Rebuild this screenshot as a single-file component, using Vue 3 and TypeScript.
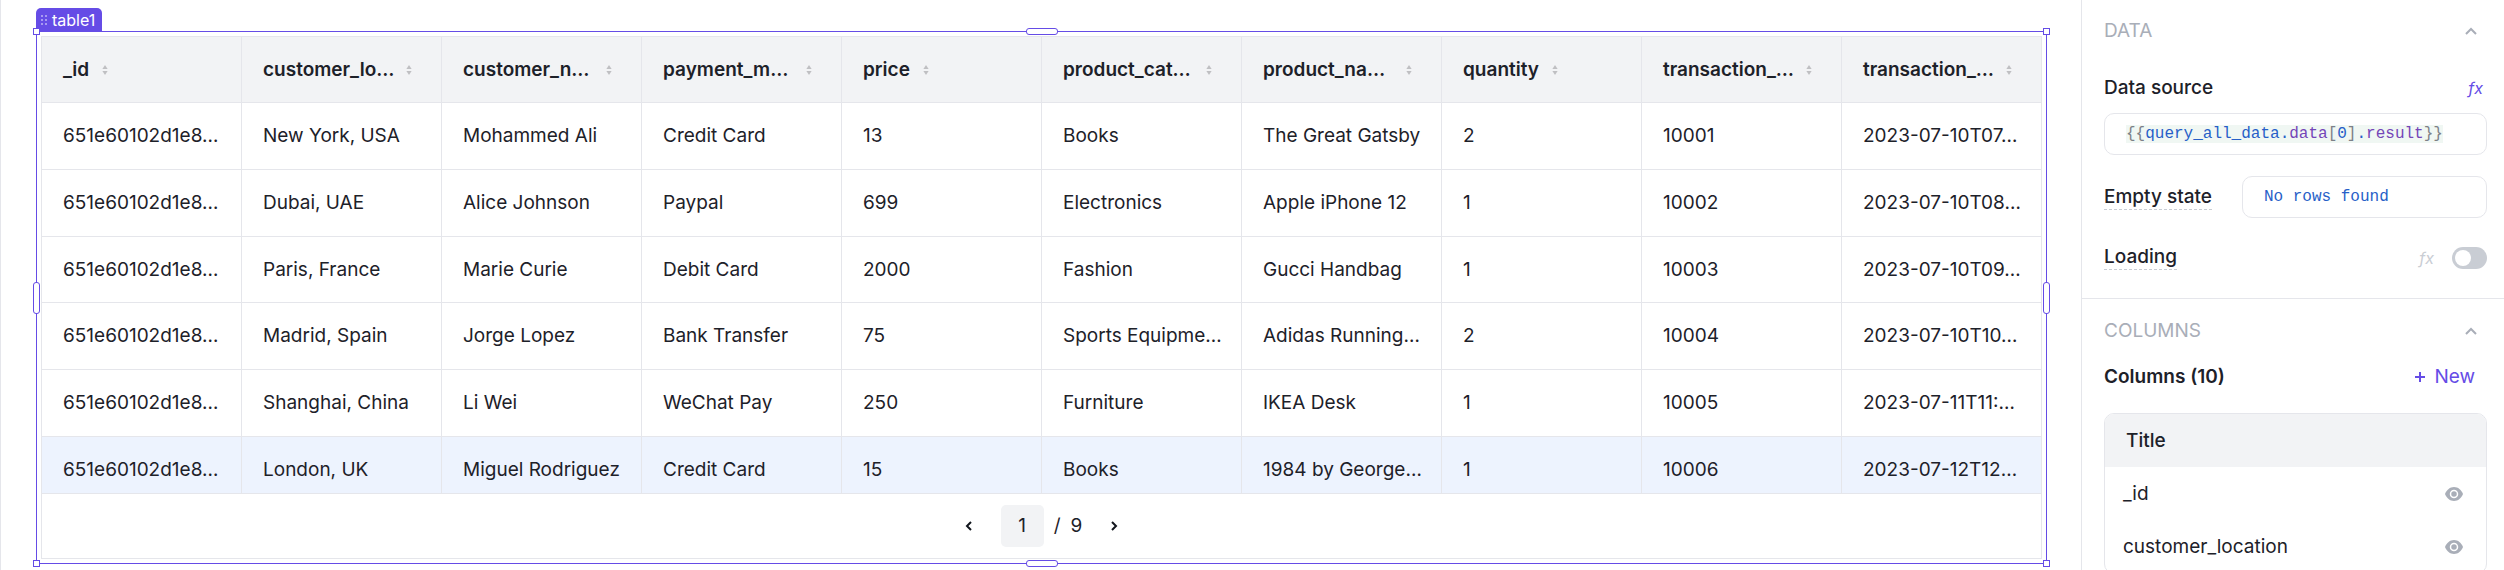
<script setup lang="ts">
import { ref } from 'vue'

interface Column {
  name: string
  cut?: boolean
}

const columns: Column[] = [
  { name: '_id' },
  { name: 'customer_lo…', cut: true },
  { name: 'customer_n…', cut: true },
  { name: 'payment_m…', cut: true },
  { name: 'price' },
  { name: 'product_cat…', cut: true },
  { name: 'product_na…', cut: true },
  { name: 'quantity' },
  { name: 'transaction_…', cut: true },
  { name: 'transaction_…', cut: true },
]

const rows: string[][] = [
  ['651e60102d1e8…', 'New York, USA', 'Mohammed Ali', 'Credit Card', '13', 'Books', 'The Great Gatsby', '2', '10001', '2023-07-10T07…'],
  ['651e60102d1e8…', 'Dubai, UAE', 'Alice Johnson', 'Paypal', '699', 'Electronics', 'Apple iPhone 12', '1', '10002', '2023-07-10T08…'],
  ['651e60102d1e8…', 'Paris, France', 'Marie Curie', 'Debit Card', '2000', 'Fashion', 'Gucci Handbag', '1', '10003', '2023-07-10T09…'],
  ['651e60102d1e8…', 'Madrid, Spain', 'Jorge Lopez', 'Bank Transfer', '75', 'Sports Equipme…', 'Adidas Running…', '2', '10004', '2023-07-10T10…'],
  ['651e60102d1e8…', 'Shanghai, China', 'Li Wei', 'WeChat Pay', '250', 'Furniture', 'IKEA Desk', '1', '10005', '2023-07-11T11:…'],
  ['651e60102d1e8…', 'London, UK', 'Miguel Rodriguez', 'Credit Card', '15', 'Books', '1984 by George…', '1', '10006', '2023-07-12T12…'],
]

const activeRow = ref(5)
const emptyState = ref('No rows found')
const loading = ref(false)
const columnFields = ['_id', 'customer_location']
const handles = ['nw', 'n', 'ne', 'w', 'e', 'sw', 's', 'se']
</script>

<template>
  <div class="editor">
    <main class="canvas">
      <section class="widget">
        <div class="badge">
          <svg width="6" height="10" viewBox="0 0 6 10" fill="#fff" aria-hidden="true">
            <g v-for="y in [1, 5, 9]" :key="y">
              <circle cx="1" :cy="y" r=".8" />
              <circle cx="5" :cy="y" r=".8" />
            </g>
          </svg>
          <span>table1</span>
        </div>
        <span v-for="h in handles" :key="h" class="handle" :class="h"></span>

        <div class="grid-box">
          <div class="grid-scroll">
            <table>
              <thead>
                <tr>
                  <th v-for="(c, i) in columns" :key="i" scope="col">
                    <div class="head">
                      <span :class="{ cut: c.cut }">{{ c.name }}</span>
                      <svg width="6" height="10" viewBox="0 0 6 10" fill="#bfbfc2" aria-hidden="true">
                        <path d="M3 0 5.600 4H.4z" />
                        <path d="M3 10 5.600 6H.4z" />
                      </svg>
                    </div>
                  </th>
                </tr>
              </thead>
              <tbody>
                <tr v-for="(r, i) in rows" :key="i" :class="{ active: i === activeRow }" @click="activeRow = i">
                  <td v-for="(v, j) in r" :key="j">{{ v }}</td>
                </tr>
              </tbody>
            </table>
          </div>
          <nav class="pager" aria-label="Pagination">
            <button type="button" class="step" aria-label="Previous page">
              <svg width="7" height="10" viewBox="0 0 7 10" fill="none" stroke="#11151c" stroke-width="2" aria-hidden="true"><path d="M6 1 2 5l4 4" /></svg>
            </button>
            <button type="button" class="page">1</button>
            <span>/</span>
            <span class="total">9</span>
            <button type="button" class="step" aria-label="Next page">
              <svg width="7" height="10" viewBox="0 0 7 10" fill="none" stroke="#11151c" stroke-width="2" aria-hidden="true"><path d="m1 1 4 4-4 4" /></svg>
            </button>
          </nav>
        </div>
      </section>
    </main>

    <aside class="panel">
      <section class="data">
        <button type="button" class="section-head">
          <span>DATA</span>
          <svg width="12" height="8" viewBox="0 0 12 8" fill="none" stroke="#a9aeb8" stroke-width="2" aria-hidden="true"><path d="m1 7 5-5 5 5" /></svg>
        </button>
        <div class="line source-line">
          <span id="source-label">Data source</span>
          <button type="button" class="fx on">fx</button>
        </div>
        <div class="field code" role="textbox" contenteditable="true" spellcheck="false" aria-labelledby="source-label"><code><i>{{ '{{' }}</i>query_all_data.<b>data</b><i>[</i>0<i>]</i>.<b>result</b><i>{{ '}\}' }}</i></code></div>
        <div class="line empty-line">
          <label for="empty-state" class="hint">Empty state</label>
          <input id="empty-state" v-model="emptyState" class="field" type="text" spellcheck="false" />
        </div>
        <div class="line loading-line">
          <label for="loading" class="hint">Loading</label>
          <button type="button" class="fx">fx</button>
          <input id="loading" v-model="loading" class="switch" type="checkbox" role="switch" />
        </div>
      </section>

      <section class="columns">
        <button type="button" class="section-head">
          <span>COLUMNS</span>
          <svg width="12" height="8" viewBox="0 0 12 8" fill="none" stroke="#a9aeb8" stroke-width="2" aria-hidden="true"><path d="m1 7 5-5 5 5" /></svg>
        </button>
        <div class="line columns-line">
          <h2>Columns (10)</h2>
          <button type="button" class="new">
            <svg width="10" height="10" viewBox="0 0 10 10" stroke="#654ce6" stroke-width="2" aria-hidden="true"><path d="M5 0v10M0 5h10" /></svg>
            New
          </button>
        </div>
        <div class="list">
          <div class="list-title">Title</div>
          <ul>
            <li v-for="f in columnFields" :key="f">
              <span>{{ f }}</span>
              <button type="button" class="eye" :aria-label="'Hide ' + f">
                <svg width="18" height="14" viewBox="0 0 18 14" aria-hidden="true">
                  <path d="M9 0C5 0 1.600 2.800 0 7c1.600 4.200 5 7 9 7s7.400-2.800 9-7c-1.600-4.200-5-7-9-7z" fill="#a9aeb8" />
                  <circle cx="9" cy="7" r="3.500" fill="#a9aeb8" stroke="#fff" stroke-width="1.500" />
                </svg>
              </button>
            </li>
          </ul>
        </div>
      </section>
    </aside>
  </div>
</template>

<style>
body {
  margin: 0;
  background: #fff;
}
</style>

<style scoped>
* {
  box-sizing: border-box;
}
.editor {
  display: flex;
  height: 100vh;
  overflow: hidden;
  font-family: Inter, sans-serif;
  font-size: 19px;
  line-height: 24px;
  color: #1d2129;
}
button {
  padding: 0;
  border: 0;
  background: none;
  font: inherit;
  color: inherit;
  cursor: pointer;
}
svg {
  display: block;
  flex: none;
}
.canvas {
  flex: 1;
  min-width: 0;
  display: flex;
  padding: 31px 34px 6px 35px;
  border-left: 1px solid #e5e6eb;
}
.widget {
  position: relative;
  flex: 1;
  min-width: 0;
  display: flex;
  padding: 4px;
  border: 1px solid #654ce6;
}
.badge {
  position: absolute;
  left: -1px;
  bottom: 100%;
  display: flex;
  align-items: center;
  gap: 5px;
  height: 24px;
  padding: 0 7px 0 5px;
  border-radius: 5px 5px 0 0;
  background: #654ce6;
  color: #fff;
  font-size: 16px;
}
.handle {
  position: absolute;
  z-index: 1;
  width: 7px;
  height: 7px;
  border: 1px solid #654ce6;
  background: #fff;
}
.nw, .n, .ne { top: -4px; }
.sw, .s, .se { bottom: -4px; }
.nw, .w, .sw { left: -4px; }
.ne, .e, .se { right: -4px; }
.n, .s {
  left: calc(50% - 16px);
  width: 32px;
  border-radius: 3px;
}
.w, .e {
  top: calc(50% - 16px);
  height: 32px;
  border-radius: 3px;
}
.grid-box {
  flex: 1;
  min-width: 0;
  display: flex;
  flex-direction: column;
  border: 1px solid #e5e6eb;
}
.grid-scroll {
  flex: 1;
  min-height: 0;
  overflow: hidden;
}
/* One pixel wider than its box, so the last column's rule falls under the box border. */
table {
  width: calc(100% + 1px);
  table-layout: fixed;
  border-collapse: separate;
  border-spacing: 0;
}
th,
td {
  height: 67px;
  padding: 0 0 0 21px;
  border-right: 1px solid #e5e6eb;
  border-bottom: 1px solid #e5e6eb;
  text-align: left;
  font-weight: 400;
  white-space: nowrap;
}
th {
  height: 66px;
  background: #f2f3f5;
  font-weight: 600;
}
tr:nth-child(3n) td {
  height: 66px;
}
.active td {
  background: #edf3fe;
}
.head {
  display: flex;
  align-items: center;
  gap: 13px;
}
.cut {
  width: 130px;
}
.pager {
  display: flex;
  align-items: center;
  justify-content: center;
  gap: 10px;
  height: 65px;
  border-top: 1px solid #e5e6eb;
}
.page {
  width: 43px;
  height: 42px;
  border-radius: 5px;
  background: #f2f3f5;
}
.step {
  display: flex;
  align-items: center;
  justify-content: center;
  width: 45px;
  height: 42px;
}
.panel {
  flex: none;
  width: 423px;
  border-left: 1px solid #e5e6eb;
}
.data,
.columns {
  padding: 19px 17px 0 22px;
}
.data {
  padding-bottom: 28px;
  border-bottom: 1px solid #e5e6eb;
}
.columns {
  padding-top: 20px;
}
.section-head {
  display: flex;
  align-items: center;
  justify-content: space-between;
  width: 100%;
  padding-right: 10px;
  color: #a9aeb8;
}
.line {
  display: flex;
  align-items: center;
}
.source-line {
  justify-content: space-between;
  margin: 33px 0 13px;
  padding-right: 4px;
  font-weight: 500;
}
.fx {
  font-style: italic;
  font-weight: 400;
  font-size: 16px;
  color: #c9cdd4;
}
.fx.on {
  color: #654ce6;
}
.field {
  width: 100%;
  height: 42px;
  padding: 0 21px;
  border: 1px solid #e5e6eb;
  border-radius: 10px;
  outline: none;
  background: #fff;
  color: #275fc8;
  font: 16px/18px "Liberation Mono", monospace;
}
.code {
  display: flex;
  align-items: center;
}
.code code {
  background: #f0f7f3;
  font: inherit;
}
.code i {
  font-style: normal;
  color: #7c8087;
}
.code b {
  font-weight: 400;
  color: #7446b8;
}
.empty-line {
  gap: 30px;
  margin-top: 21px;
}
.hint {
  flex: none;
  border-bottom: 1px dashed #c9cdd4;
  font-weight: 500;
}
.empty-line .field {
  flex: 1;
  min-width: 0;
}
.loading-line {
  margin-top: 27px;
}
.loading-line .fx {
  margin-left: auto;
}
.switch {
  appearance: none;
  display: flex;
  align-items: center;
  width: 35px;
  height: 22px;
  margin: 0 0 0 18px;
  padding: 0 3px;
  border-radius: 11px;
  background: #c9cdd4;
}
.switch::before {
  content: "";
  width: 16px;
  height: 16px;
  border-radius: 50%;
  background: #fff;
}
.switch:checked {
  justify-content: flex-end;
  background: #654ce6;
}
.columns-line {
  justify-content: space-between;
  margin: 22px 0 24px;
  padding-right: 12px;
}
h2 {
  margin: 0;
  font-size: 19px;
  font-weight: 600;
}
.new {
  display: flex;
  align-items: center;
  gap: 9px;
  color: #654ce6;
}
.list {
  border: 1px solid #e5e6eb;
  border-radius: 10px;
  overflow: hidden;
}
.list-title {
  padding: 15px 21px 14px;
  background: #f2f3f5;
  font-weight: 500;
}
ul {
  margin: 0;
  padding: 0;
  list-style: none;
}
li {
  display: flex;
  align-items: center;
  justify-content: space-between;
  height: 53px;
  padding: 0 23px 0 18px;
}
</style>
